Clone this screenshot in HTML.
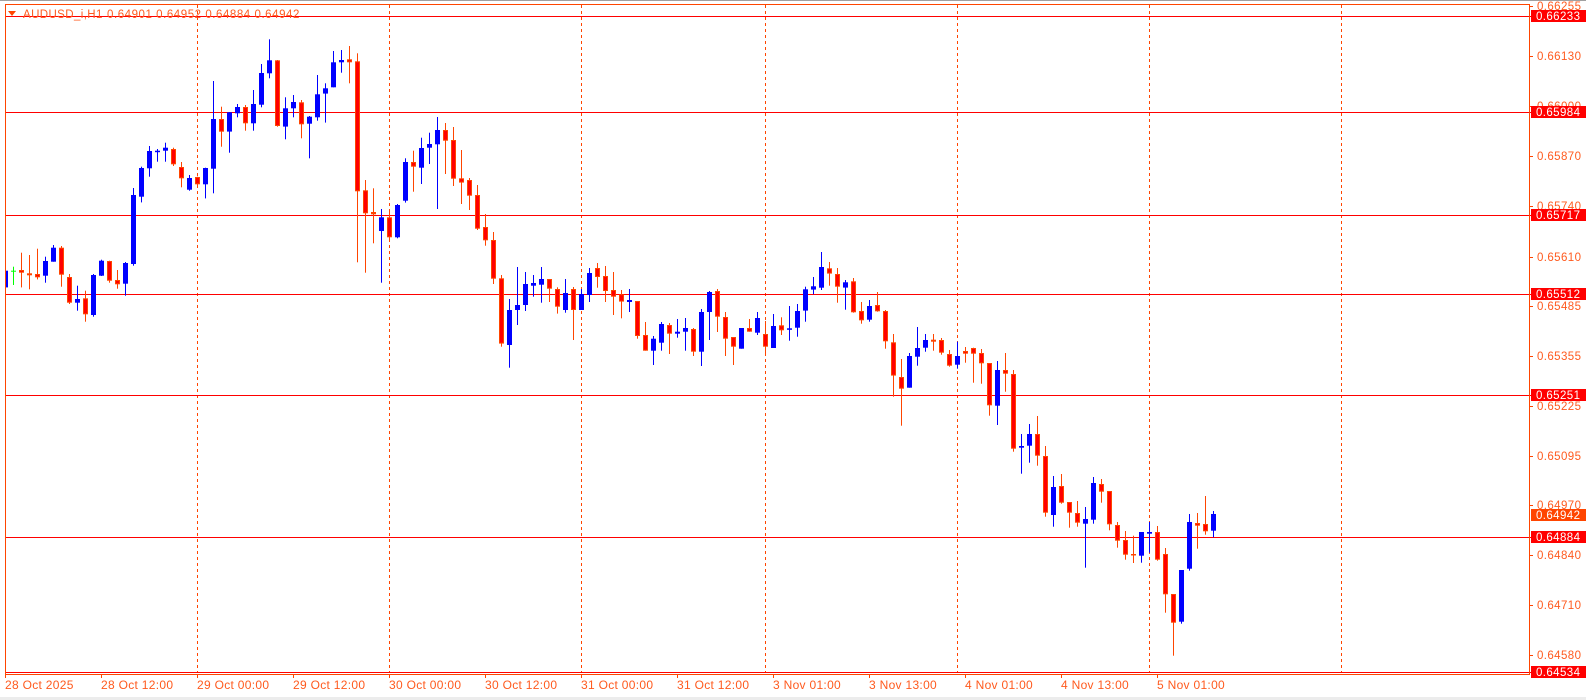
<!DOCTYPE html>
<html><head><meta charset="utf-8">
<style>
html,body{margin:0;padding:0;background:#fff;width:1586px;height:700px;overflow:hidden}
svg{display:block}
text{font-family:"Liberation Sans",sans-serif}
</style></head>
<body>
<svg id="s" width="1586" height="700" viewBox="0 0 1586 700" xmlns="http://www.w3.org/2000/svg">
<rect x="0" y="0" width="1586" height="700" fill="#fff"/>
<rect x="0" y="0" width="1586" height="1" fill="#a0a0a0"/>
<rect x="0" y="697" width="1586" height="3" fill="#ececec"/>
<g id="grid" stroke="#ff4500" stroke-width="1" stroke-dasharray="3,3">
<line x1="197.5" y1="5" x2="197.5" y2="672"/>
<line x1="389.5" y1="5" x2="389.5" y2="672"/>
<line x1="581.5" y1="5" x2="581.5" y2="672"/>
<line x1="765.5" y1="5" x2="765.5" y2="672"/>
<line x1="957.5" y1="5" x2="957.5" y2="672"/>
<line x1="1149.5" y1="5" x2="1149.5" y2="672"/>
<line x1="1341.5" y1="5" x2="1341.5" y2="672"/>
</g>
<g stroke="#ff0000" stroke-width="1">
<line x1="5" y1="16.5" x2="1531" y2="16.5"/>
<line x1="5" y1="112.5" x2="1531" y2="112.5"/>
<line x1="5" y1="215.5" x2="1531" y2="215.5"/>
<line x1="5" y1="294.5" x2="1531" y2="294.5"/>
<line x1="5" y1="395.5" x2="1531" y2="395.5"/>
<line x1="5" y1="537.5" x2="1531" y2="537.5"/>
<line x1="5" y1="672.5" x2="1531" y2="672.5"/>
</g>
<g id="candles"></g>
<rect x="5.5" y="4.5" width="1524" height="670" fill="none" stroke="#ff4500" stroke-width="1"/>
<g id="axis" fill="#ff5a1e" font-size="11.5" letter-spacing="0.4"></g>
<g id="tags"></g>
<polygon points="8,11 16,11 12,16" fill="#ff4500"/>
<text x="23" y="18" font-size="11.5" fill="#ff5a1e" letter-spacing="0.4">AUDUSD_i,H1</text>
<text x="107" y="18" font-size="11.5" fill="#ff5a1e" letter-spacing="0.55">0.64901 0.64952 0.64884 0.64942</text>
<g id="time" fill="#ff5a1e" font-size="12" letter-spacing="0.3"></g>
</svg>
<script>
var NS="http://www.w3.org/2000/svg";
function el(p,t,a,txt){var e=document.createElementNS(NS,t);for(var k in a)e.setAttribute(k,a[k]);if(txt!=null)e.textContent=txt;p.appendChild(e);return e;}
var A=`b 805 812 862 862
g 800 812 814 855
r 758 810 818 862
r 765 820 826 868
r 746 822 832 838
b 770 783 827 848
b 735 743 785 785
r 738 743 824 860
r 822 831 908 912
b 857 897 908 932
r 872 895 943 965
b 822 825 945 950
b 779 782 827 828
r 782 783 842 848
r 810 840 853 866
b 786 789 851 887
b 564 585 792 797
b 500 504 590 607
b 438 453 505 530
b 447 452 455 485
b 428 443 452 485
r 443 447 493 498
r 486 501 535 562
b 525 534 569 572
r 530 531 553 558
b 503 504 553 595
b 243 357 506 580
r 320 357 395 440
b 336 337 395 458
b 312 321 340 352
r 315 321 370 392
b 270 312 370 392
b 192 219 314 322
b 118 181 220 235
r 180 181 378 380
b 292 325 380 418
b 285 306 325 352
r 300 307 373 415
b 348 350 371 475
b 225 283 352 362
b 250 265 281 368
b 153 187 262 262
b 150 180 187 218
r 138 178 187 250
r 160 184 574 787
r 540 571 640 818
r 565 636 643 730
b 627 652 693 848
r 632 652 712 718
b 612 615 712 715`;
var B=`b 175 186 302 308
r 152 186 200 275
b 113 144 203 252
b 98 132 143 192
b 51 90 133 327
r 69 90 122 222
r 81 120 236 258
r 150 235 248 312
r 234 240 287 330
r 255 285 386 390
r 342 381 421 437
r 396 420 536 552
r 525 535 731 740
b 597 630 735 803
b 501 615 630 675
b 516 552 615 633
b 525 549 557 590
b 501 537 554 608
r 537 537 566 606
r 562 567 620 641
b 537 579 630 638
r 561 567 630 720
b 567 582 630 630
b 504 519 585 606
r 489 504 531 563
r 498 528 573 606
r 516 570 590 645
r 570 583 605 655
b 567 600 606 636
r 603 603 708 716
r 666 705 752 752
b 708 716 752 795
b 666 672 728 752
r 669 675 701 762
b 657 695 701 713
b 654 684 695 752
r 684 687 755 768
b 627 636 755 798
b 573 576 636 720
r 567 573 650 696
r 636 651 716 768
r 711 711 740 795
b 684 684 746 746
r 657 684 695 695
b 636 654 698 705
r 663 702 740 765
b 642 678 744 744`;
var C=`r 232 256 271 285
b 198 265 269 302
b 192 213 263 290
b 140 148 212 245
b 111 139 149 163
b 36 81 143 150
r 66 85 101 137
r 84 102 140 188
b 120 127 143 209
r 114 124 217 218
r 186 213 241 251
b 180 198 239 245
r 156 195 214 215
r 210 213 304 326
r 282 307 407 470
r 357 411 446 557
b 339 348 443 443
b 261 324 350 377
b 282 300 323 335
r 282 299 305 332
r 294 300 338 344
r 330 342 377 380
b 305 348 374 386
r 321 333 341 368
r 323 324 341 428
r 327 339 370 431
r 369 369 496 527
b 363 390 497 555
r 339 390 401 455
r 390 402 626 635
b 582 618 623 701
b 552 582 617 668
r 528 582 647 677
r 618 648 818 830
b 708 741 825 860
r 702 738 788 791
r 786 786 818 863
r 783 819 848 860
b 801 837 851 983
b 711 729 839 851
r 717 732 755 788
r 753 753 853 871
r 846 855 902 923
r 873 900 944 959
r 887 942 944 969
b 876 876 947 968
b 846 876 881 938
r 858 876 959 962
r 924 942 1063 1118
r 1062 1062 1148 1247
b 990 990 1145 1151
b 822 846 986 992
r 819 849 857 926
r 768 852 874 884
b 813 822 872 892`;
var g=document.getElementById('candles');
var idx=0;
function seg(str,yoff){
 str.trim().split('\n').forEach(function(l){
  var p=l.trim().split(/\s+/);var c=p[0];
  var hi=yoff+(+p[1])/3,top=yoff+(+p[2])/3,bot=yoff+(+p[3])/3,lo=yoff+(+p[4])/3;
  var cx=Math.round(5.3+8*idx);idx++;
  var col=c=='b'?'#0000ff':(c=='g'?'#00ff00':'#ff4500');
  var h=Math.max(1.5,bot-top);
  if(cx<6){el(g,'rect',{x:6,y:top.toFixed(1),width:2,height:h.toFixed(1),fill:col});return;}
  el(g,'rect',{x:cx,y:hi.toFixed(1),width:1,height:Math.max(1,lo-hi).toFixed(1),fill:col});
  if(c=='g'){el(g,'rect',{x:cx-2,y:top.toFixed(1),width:5,height:1,fill:col});return;}
  if(c=='b'){el(g,'rect',{x:cx-2,y:top.toFixed(1),width:5,height:h.toFixed(1),fill:col});}
  else{el(g,'rect',{x:cx-2,y:top.toFixed(1),width:5,height:h.toFixed(1),fill:'#ff4500'});
   if(h>2.5)el(g,'rect',{x:cx-1,y:(top+1).toFixed(1),width:3,height:(h-2).toFixed(1),fill:'#ff0000'});}
 });
}
seg(A,0);seg(B,100);seg(C,240);
var ax=document.getElementById('axis');
[["0.66255",6],["0.66130",56],["0.66000",106],["0.65870",156],["0.65740",206],["0.65610",257],["0.65485",306],["0.65355",356],["0.65225",406],["0.65095",456],["0.64970",505],["0.64840",555],["0.64710",605],["0.64580",655]].forEach(function(a){
 el(ax,'rect',{x:1529,y:a[1],width:4,height:1,fill:'#ff4500'});
 el(ax,'text',{x:1537,y:a[1]+4},a[0]);
});
var tg=document.getElementById('tags');
[["0.66233",16,'#ff0000'],["0.65984",112,'#ff0000'],["0.65717",215,'#ff0000'],["0.65512",294,'#ff0000'],["0.65251",395,'#ff0000'],["0.64942",515,'#ff4500'],["0.64884",537,'#ff0000'],["0.64534",672,'#ff0000']].forEach(function(a){
 el(tg,'rect',{x:1531,y:a[1]-6,width:55,height:12,fill:a[2]});
 el(tg,'text',{x:1536,y:a[1]+4,fill:'#fff','font-size':11.5,'letter-spacing':0.4},a[0]);
});
var tm=document.getElementById('time');
[["28 Oct 2025",5],["28 Oct 12:00",101],["29 Oct 00:00",197],["29 Oct 12:00",293],["30 Oct 00:00",389],["30 Oct 12:00",485],["31 Oct 00:00",581],["31 Oct 12:00",677],["3 Nov 01:00",773],["3 Nov 13:00",869],["4 Nov 01:00",965],["4 Nov 13:00",1061],["5 Nov 01:00",1157]].forEach(function(a){
 el(tm,'rect',{x:a[1],y:674,width:1,height:4,fill:'#ff4500'});
 el(tm,'text',{x:a[1],y:689},a[0]);
});
</script>
</body></html>
